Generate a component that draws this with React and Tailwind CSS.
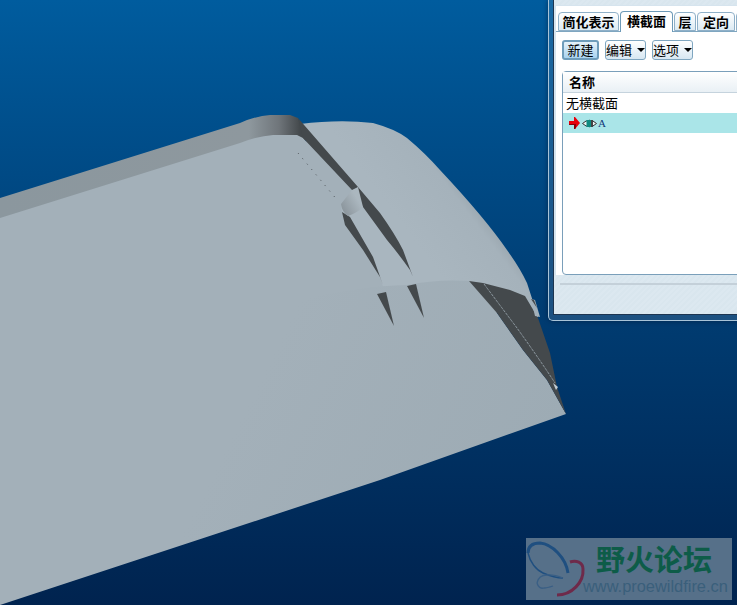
const cjk = { fontFamily: '"Noto Sans CJK SC", sans-serif' };

function Model() {
  return (
    <svg className="absolute left-0 top-0" width="737" height="605" viewBox="0 0 737 605">
      <defs>
        <linearGradient id="wing" gradientUnits="userSpaceOnUse" x1="395" y1="215" x2="468" y2="160">
          <stop offset="0" stopColor="#a9b6bf" />
          <stop offset="0.65" stopColor="#a5b2bb" />
          <stop offset="1" stopColor="#8b979f" />
        </linearGradient>
        <linearGradient id="band" gradientUnits="userSpaceOnUse" x1="0" y1="0" x2="300" y2="0">
          <stop offset="0" stopColor="#8b979e" />
          <stop offset="0.83" stopColor="#8e989e" />
          <stop offset="0.93" stopColor="#6f757a" />
          <stop offset="1" stopColor="#44494c" />
        </linearGradient>
        <linearGradient id="tab" gradientUnits="userSpaceOnUse" x1="341" y1="210" x2="358" y2="200">
          <stop offset="0" stopColor="#89939a" />
          <stop offset="1" stopColor="#abb7bf" />
        </linearGradient>
        <linearGradient id="lower" gradientUnits="userSpaceOnUse" x1="300" y1="300" x2="560" y2="430">
          <stop offset="0" stopColor="#a3b0b9" />
          <stop offset="1" stopColor="#9dabb4" />
        </linearGradient>
      </defs>
      {/* wing */}
      <path d="M300,124 Q340,119 373,123 Q395,129 407,138 Q425,153 440,170 Q485,218 507,250 Q520,268 527,283 L538,317 L470,310 L340,310 L320,180 Z" fill="url(#wing)" />
      {/* top band */}
      <path d="M0,198 L240,123 Q256,116 270,115 L290,115 L298,118 L306,140 L270,140 L0,222 Z" fill="url(#band)" />
      {/* upper body */}
      <path d="M0,218 L240,143 Q258,136 273,135 L297,135 L303,138 L352,190 L341,207 L345,225 L363,250 L380,277 L384,290 L410,320 L300,420 L0,420 Z" fill="#a3b0b9" />
      {/* dark channel */}
      <path d="M298,118 L358,187 L380,213 Q395,234 403,250 L413,277 L410,270 Q398,253 387,240 L363,207 L352,190 L303,138 Z" fill="#44494c" />
      <path d="M342,212 L350,217 L373,257 L383,285 L380,277 L363,250 L345,225 Z" fill="#44494c" />
      {/* tab */}
      <path d="M341,204 L352,190 L358,187 L363,207 Q357,213 348,216 Q342,212 341,204 Z" fill="url(#tab)" />
      {/* dotted line */}
      <path d="M298,153 L338,201" stroke="#4a5054" strokeWidth="1" strokeDasharray="1 6" fill="none" />
      {/* lower surface */}
      <path d="M0,605 L0,400 L300,300 Q360,286 407,285 Q437,279 469,281 L497,313 L523,350 L547,380 L566,414 L380,480 Z" fill="url(#lower)" />
      {/* wedges */}
      <path d="M377,294 L386,292 L394,326 Z" fill="#44494c" />
      <path d="M407,286 L416,284 L424,318 Z" fill="#44494c" />
      <path d="M469,281 L483,283 L510,290 L525,296 L538,318 L550,353 L557,387 L566,414 L547,380 L523,350 L497,313 Z" fill="#44494c" />
      <path d="M484,284 Q505,312 517,328 Q540,360 555,383" stroke="#9eabb4" strokeWidth="0.8" strokeDasharray="3 1" fill="none" />
      <path d="M531,299 L535,300 L540,317 L535,316 Z" fill="#a3b0b9" />
      <path d="M531,299 L534,300 L537,308 Z" fill="#44494c" />
      <path d="M553,383 L558,387 L556,390 Z" fill="#c3ccd2" />
    </svg>
  );
}

function Arrow() {
  return (
    <svg width="11" height="12" viewBox="0 0 11 12" className="shrink-0">
      <path d="M0,4 H5 V0 H6 L11,6 L6,12 H5 V8 H0 Z" fill="#e8000b" />
      <path d="M0,8 H5 V12 H6 L7,11 V7 H0 Z" fill="#8a0008" />
    </svg>
  );
}

function Eye() {
  return (
    <svg width="15" height="9" viewBox="0 0 15 9" className="shrink-0">
      <path d="M0.5,4.5 Q7.5,-2 14.5,4.5 Q7.5,11 0.5,4.5 Z" fill="#eef4f4" stroke="#333" strokeWidth="1" />
      <rect x="4.5" y="1" width="6" height="7" fill="#0e8a80" />
      <rect x="9" y="1" width="2" height="7" fill="#444" />
    </svg>
  );
}

function Caret() {
  return <span className="ml-[5px] h-0 w-0 border-x-[4px] border-t-[4px] border-x-transparent border-t-black" />;
}

function Tab({ label, active, w }) {
  return (
    <div
      className={
        active
          ? "relative top-[1px] flex h-[21px] items-center justify-center rounded-t-[4px] border border-b-0 border-[#6d9ab8] bg-white pb-[2px] text-[13px] font-bold text-black"
          : "flex h-[19px] items-center justify-center rounded-t-[4px] border border-[#8fb0c8] bg-gradient-to-b from-white to-[#dceaf3] text-[13px] font-bold text-black"
      }
      style={{ width: w }}
    >
      {label}
    </div>
  );
}

function Panel() {
  return (
    <div
      className="absolute left-[548px] top-0 h-[321px] w-[240px] rounded-bl-[5px] border-b border-l border-[#a9c4d8] bg-gradient-to-b from-[#1a6aa4] to-[#1c5080] pb-[5px] pl-[4px] shadow-[0_0_5px_rgba(0,20,50,0.6)]"
      style={cjk}
    >
      <div className="flex h-full flex-col border-b border-l border-[#1d3550] bg-[repeating-linear-gradient(135deg,#dce8f0_0px,#dce8f0_2px,#d9e6ee_2px,#d9e6ee_4px)]">
        <div className="mt-[5px] flex h-[270px] flex-col border-l-2 border-t border-[#d6e4ee] bg-white">
          <div className="mt-[6px] flex h-[20px] items-end gap-px border-b border-[#7fa6c0] pl-[2px]">
            <Tab label="简化表示" w={61} />
            <Tab label="横截面" active w={53} />
            <Tab label="层" w={22} />
            <Tab label="定向" w={38} />
            <Tab label="" w={30} />
          </div>
          <div className="flex gap-[6px] pl-[6px] pt-[8px] text-[13px] text-black">
            <div className="flex h-[20px] w-[37px] items-center justify-center rounded-[3px] border-2 border-[#6f9dbb] bg-gradient-to-b from-[#e6f2fa] to-[#a9d3ef] pb-[1px]">新建</div>
            <div className="flex h-[20px] w-[41px] items-center justify-center rounded-[3px] border border-[#7fa6c0] bg-gradient-to-b from-white to-[#d7e7f2] pb-[1px]">编辑<Caret /></div>
            <div className="flex h-[20px] w-[41px] items-center justify-center rounded-[3px] border border-[#7fa6c0] bg-gradient-to-b from-white to-[#d7e7f2] pb-[1px]">选项<Caret /></div>
          </div>
          <div className="ml-[6px] mt-[11px] flex h-[204px] flex-col rounded-[4px] border border-[#7a9fba] bg-white text-[13px] text-black">
            <div className="flex h-[21px] items-center border-b border-[#c5d3dd] bg-gradient-to-b from-white to-[#e9f0f5] pl-[6px] font-bold">名称</div>
            <div className="flex h-[20px] items-center pl-[3px]">无横截面</div>
            <div className="flex h-[20px] items-center bg-[#aae5e8] pl-[6px]">
              <Arrow />
              <span className="ml-[2px] flex"><Eye /></span>
              <span className="ml-[1px] text-[11px] leading-none text-[#123a7a]" style={{ fontFamily: '"Liberation Serif", serif' }}>A</span>
            </div>
          </div>
        </div>
        <div className="ml-[6px] mt-[8px] h-[2px] bg-[#c4d0d9]" />
      </div>
    </div>
  );
}

function Logo() {
  return (
    <div className="absolute left-[526px] top-[538px] flex h-[62px] w-[206px] bg-[#567089]">
      <svg className="absolute left-0 top-0" width="60" height="62" viewBox="0 0 60 62" fill="none">
        <path d="M2,15 C2,7 8,5 14,5 C26,6 40,20 42,35" stroke="#1f4f80" strokeWidth="3" />
        <path d="M2,15 C4,24 10,32 17,35 C24,38 31,40 37,40" stroke="#1f4f80" strokeWidth="1.4" />
        <path d="M44,24 C50,22 57,24 57,31 C58,44 46,57 31,57" stroke="#6e2a4a" strokeWidth="3" />
        <path d="M11,45 C12,40 16,37 21,37 C27,36 32,38 37,40" stroke="#3a5f85" strokeWidth="1.3" />
        <path d="M11,45 C12,49 15,51 18,50 C21,50 24,49 27,48" stroke="#3a5f85" strokeWidth="1.3" />
      </svg>
      <div className="absolute left-[70px] top-[3px] whitespace-nowrap text-[29px] font-bold leading-[34px] text-[#0d5c48]" style={cjk}>野火论坛</div>
      <div className="absolute left-[57px] top-[38px] whitespace-nowrap text-[16.4px] leading-[20px] text-[#3a5f7b]" style={{ fontFamily: '"Liberation Sans", sans-serif' }}>www.proewildfire.cn</div>
    </div>
  );
}

export default function App() {
  return (
    <div className="relative h-[605px] w-[737px] overflow-hidden bg-gradient-to-b from-[#005c9e] via-[#003d73] to-[#00234f]">
      <Model />
      <Panel />
      <Logo />
    </div>
  );
}
